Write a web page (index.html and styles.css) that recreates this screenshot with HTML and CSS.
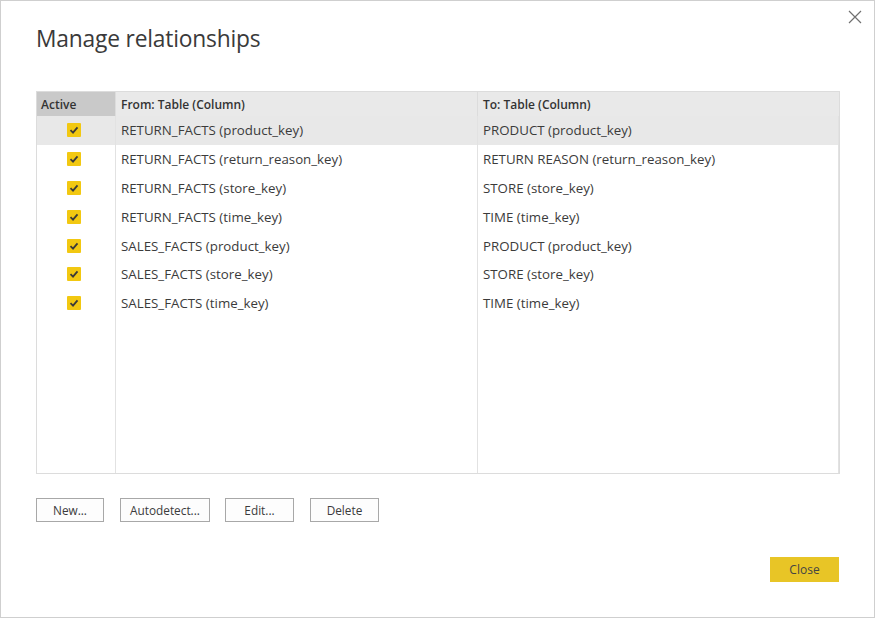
FILE: index.html
```html
<!DOCTYPE html>
<html>
<head>
<meta charset="utf-8">
<link rel="stylesheet" href="styles.css">
</head>
<body>
<div class="dialog">
  <button class="x-btn" aria-label="Close">
    <svg width="14" height="14" viewBox="0 0 14 14"><path d="M1 1 L13 13 M13 1 L1 13" stroke="#707070" stroke-width="1.2" fill="none"/></svg>
  </button>
  <h1 class="title">Manage relationships</h1>
  <div class="grid">
    <div class="hcell hactive">Active</div>
    <div class="hcell">From: Table (Column)</div>
    <div class="hcell hlast">To: Table (Column)</div>

    <div class="cell ccheck sel"><span class="cb"><svg width="14" height="14" viewBox="0 0 14 14"><rect width="14" height="14" rx="1" fill="#F2C811"/><path d="M3.5 7.2 L6 9.6 L10.5 4.4" stroke="#3a3a3a" stroke-width="1.8" fill="none"/></svg></span></div>
    <div class="cell sel">RETURN_FACTS (product_key)</div>
    <div class="cell clast sel">PRODUCT (product_key)</div>

    <div class="cell ccheck"><span class="cb"><svg width="14" height="14" viewBox="0 0 14 14"><rect width="14" height="14" rx="1" fill="#F2C811"/><path d="M3.5 7.2 L6 9.6 L10.5 4.4" stroke="#3a3a3a" stroke-width="1.8" fill="none"/></svg></span></div>
    <div class="cell">RETURN_FACTS (return_reason_key)</div>
    <div class="cell clast">RETURN REASON (return_reason_key)</div>

    <div class="cell ccheck"><span class="cb"><svg width="14" height="14" viewBox="0 0 14 14"><rect width="14" height="14" rx="1" fill="#F2C811"/><path d="M3.5 7.2 L6 9.6 L10.5 4.4" stroke="#3a3a3a" stroke-width="1.8" fill="none"/></svg></span></div>
    <div class="cell">RETURN_FACTS (store_key)</div>
    <div class="cell clast">STORE (store_key)</div>

    <div class="cell ccheck"><span class="cb"><svg width="14" height="14" viewBox="0 0 14 14"><rect width="14" height="14" rx="1" fill="#F2C811"/><path d="M3.5 7.2 L6 9.6 L10.5 4.4" stroke="#3a3a3a" stroke-width="1.8" fill="none"/></svg></span></div>
    <div class="cell">RETURN_FACTS (time_key)</div>
    <div class="cell clast">TIME (time_key)</div>

    <div class="cell ccheck"><span class="cb"><svg width="14" height="14" viewBox="0 0 14 14"><rect width="14" height="14" rx="1" fill="#F2C811"/><path d="M3.5 7.2 L6 9.6 L10.5 4.4" stroke="#3a3a3a" stroke-width="1.8" fill="none"/></svg></span></div>
    <div class="cell">SALES_FACTS (product_key)</div>
    <div class="cell clast">PRODUCT (product_key)</div>

    <div class="cell ccheck"><span class="cb"><svg width="14" height="14" viewBox="0 0 14 14"><rect width="14" height="14" rx="1" fill="#F2C811"/><path d="M3.5 7.2 L6 9.6 L10.5 4.4" stroke="#3a3a3a" stroke-width="1.8" fill="none"/></svg></span></div>
    <div class="cell">SALES_FACTS (store_key)</div>
    <div class="cell clast">STORE (store_key)</div>

    <div class="cell ccheck"><span class="cb"><svg width="14" height="14" viewBox="0 0 14 14"><rect width="14" height="14" rx="1" fill="#F2C811"/><path d="M3.5 7.2 L6 9.6 L10.5 4.4" stroke="#3a3a3a" stroke-width="1.8" fill="none"/></svg></span></div>
    <div class="cell">SALES_FACTS (time_key)</div>
    <div class="cell clast">TIME (time_key)</div>

    <div class="cell filler"></div>
    <div class="cell filler"></div>
    <div class="cell filler clast"></div>
  </div>
  <div class="actions">
    <button class="btn w68">New...</button>
    <button class="btn w90 gap15">Autodetect...</button>
    <button class="btn w69">Edit...</button>
    <button class="btn w69">Delete</button>
  </div>
  <div class="footer">
    <button class="close-btn">Close</button>
  </div>
</div>
</body>
</html>
```
FILE: styles.css
```css
html, body {
  margin: 0;
  padding: 0;
  background: #fff;
}
.dialog {
  position: relative;
  box-sizing: border-box;
  width: 875px;
  height: 618px;
  border: 1px solid #cfcfcf;
  background: #fff;
  padding: 21px 35px 0 35px;
  display: flex;
  flex-direction: column;
  font-family: "Open Sans", "Noto Sans", sans-serif;
  color: #3b3b3b;
}
.x-btn {
  position: absolute;
  top: 8px;
  right: 11px;
  width: 16px;
  height: 16px;
  padding: 0;
  border: 0;
  background: transparent;
  display: flex;
  align-items: center;
  justify-content: center;
}
.title {
  margin: 0;
  font-size: 22.8px;
  font-weight: 400;
  line-height: 34px;
  color: #3a3a3a;
  letter-spacing: -0.2px;
}
.grid {
  margin-top: 35px;
  width: 804px;
  height: 383px;
  box-sizing: border-box;
  border: 1px solid #dcdcdc;
  display: grid;
  grid-template-columns: 79px 362px 1fr;
  grid-template-rows: 24px repeat(7, 28.8px) 1fr;
  font-size: 13.3px;
}
.hcell {
  background: #e9e9e9;
  font-weight: 600;
  font-size: 12px;
  display: flex;
  align-items: center;
  padding-left: 5px;
  border-right: 1px solid #dcdcdc;
  color: #333;
}
.hactive {
  background: #c9c9c9;
  padding-left: 4px;
}
.hlast, .clast {
  border-right: 0;
}
.cell {
  display: flex;
  align-items: center;
  padding-left: 5px;
  border-right: 1px solid #e2e2e2;
  color: #3b3b3b;
  white-space: nowrap;
}
.ccheck {
  justify-content: center;
  padding-left: 0;
  padding-right: 4px;
}
.cb {
  display: flex;
  width: 14px;
  height: 14px;
}
.sel {
  background: #e8e8e8;
}
.actions {
  margin-top: 24px;
  display: flex;
  gap: 16px;
}
.gap15 {
  margin-right: -1px;
}
.btn {
  height: 24px;
  box-sizing: border-box;
  border: 1px solid #a8a8a8;
  background: #fdfdfd;
  font-family: "Open Sans", "Noto Sans", sans-serif;
  font-size: 11.8px;
  color: #3b3b3b;
  padding: 0;
}
.w68 { width: 68px; }
.w90 { width: 90px; }
.w69 { width: 69px; }
.footer {
  margin-top: 35px;
  display: flex;
  justify-content: flex-end;
}
.close-btn {
  width: 69px;
  height: 25px;
  border: 0;
  background: #E8C526;
  font-family: "Open Sans", "Noto Sans", sans-serif;
  font-size: 12px;
  color: #444;
  padding: 0;
}
```
